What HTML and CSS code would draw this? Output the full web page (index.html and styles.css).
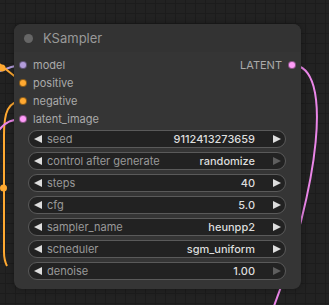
FILE: index.html
```html
<!DOCTYPE html>
<html>
	<head>
		<meta charset="utf-8">
		<title>KSampler</title>
		<link rel="stylesheet" href="styles.css">
	</head>
	<body>
		<div class="graph">
			<!-- links under the node -->
			<svg class="links" width="329" height="305" viewBox="0 0 329 305">
				<path d="M-4 72 C6 70, 12 65, 23 65" stroke="#b39ddb"/>
				<path d="M-3 62 L23 83" stroke="#ffa931"/>
				<path d="M23 101 C8 101, 4 112, 4 135 L4 252 C4 258, 5 262, 7 266" stroke="#ffa931"/>
				<path d="M-6 142 C-2 125, 10 119, 23 119" stroke="#ea86e8"/>
				<path d="M292 65 C335 65, 318 190, 274 306" stroke="#ea86e8"/>
				<circle cx="2" cy="68" r="3.5" fill="#ffa931"/>
				<circle cx="3.5" cy="188" r="3.5" fill="#ffa931"/>
			</svg>

			<div class="node">
				<div class="node-title">
					<span class="title-dot"></span>
					<span>KSampler</span>
				</div>

				<div class="slots">
					<div class="inputs">
						<div class="slot"><span class="dot model"></span>model</div>
						<div class="slot"><span class="dot cond"></span>positive</div>
						<div class="slot"><span class="dot cond"></span>negative</div>
						<div class="slot"><span class="dot latent"></span>latent_image</div>
					</div>
					<div class="outputs">
						<div class="slot">LATENT<span class="dot latent out"></span></div>
					</div>
				</div>

				<div class="widgets">
					<div class="widget">
						<span class="arrow left"></span>
						<span class="label">seed</span>
						<span class="value">9112413273659</span>
						<span class="arrow right"></span>
					</div>
					<div class="widget">
						<span class="arrow left"></span>
						<span class="label">control after generate</span>
						<span class="value">randomize</span>
						<span class="arrow right off"></span>
					</div>
					<div class="widget">
						<span class="arrow left"></span>
						<span class="label">steps</span>
						<span class="value">40</span>
						<span class="arrow right"></span>
					</div>
					<div class="widget">
						<span class="arrow left"></span>
						<span class="label">cfg</span>
						<span class="value">5.0</span>
						<span class="arrow right"></span>
					</div>
					<div class="widget">
						<span class="arrow left"></span>
						<span class="label">sampler_name</span>
						<span class="value">heunpp2</span>
						<span class="arrow right"></span>
					</div>
					<div class="widget">
						<span class="arrow left"></span>
						<span class="label">scheduler</span>
						<span class="value">sgm_uniform</span>
						<span class="arrow right"></span>
					</div>
					<div class="widget">
						<span class="arrow left"></span>
						<span class="label">denoise</span>
						<span class="value">1.00</span>
						<span class="arrow right off"></span>
					</div>
				</div>
			</div>
		</div>
	</body>
</html>
```

FILE: styles.css
```css
/* base */
* {
	margin: 0;
	padding: 0;
	box-sizing: border-box;
}

body {
	font-family: Inter, "Liberation Sans", sans-serif;
	background-color: #222;
	overflow: hidden;
	width: 329px;
	height: 305px;
}

/* canvas with grid */
.graph {
	position: relative;
	width: 329px;
	height: 305px;
	overflow: hidden;
	background-color: #222;
	background-image:
		linear-gradient(to right, #1c1c1c 1px, transparent 1px),
		linear-gradient(to bottom, #1c1c1c 1px, transparent 1px);
	background-size: 10px 10px;
	background-position: 5px 3px;
}

.links {
	position: absolute;
	left: 0;
	top: 0;
}

.links path {
	fill: none;
	stroke-width: 2;
}

/* node */
.node {
	position: absolute;
	left: 14px;
	top: 24px;
	width: 287px;
	height: 265px;
	background-color: #353535;
	border-radius: 8px;
	box-shadow: 0 0 6px rgba(0,0,0,0.35);
	overflow: hidden;
}

.node-title {
	height: 28px;
	display: flex;
	align-items: center;
	gap: 10px;
	padding-left: 10px;
	background-color: #333;
	color: #999;
	font-size: 13px;
}

.title-dot {
	width: 9px;
	height: 9px;
	border-radius: 50%;
	background-color: #666;
}

/* slots */
.slots {
	display: flex;
	justify-content: space-between;
	padding-top: 4px;
}

.slot {
	height: 18px;
	display: flex;
	align-items: center;
	gap: 6px;
	color: #aaa;
	font-size: 11px;
}

.inputs .slot {
	padding-left: 5px;
}

.outputs .slot {
	padding-right: 5px;
}

.dot {
	width: 8px;
	height: 8px;
	border-radius: 50%;
	border: 1px solid rgba(0,0,0,0.45);
}

.dot.model {
	background-color: #b39ddb;
}

.dot.cond {
	background-color: #ffa931;
}

.dot.latent {
	background-color: #ff9cf9;
}

/* widgets */
.widgets {
	display: flex;
	flex-direction: column;
	gap: 4px;
	padding: 2px 15px 0 14px;
}

.widget {
	height: 18px;
	display: flex;
	align-items: center;
	background-color: #222;
	border: 1px solid #5a5a5a;
	border-radius: 9px;
	padding: 0 4px 0 5px;
	font-size: 11px;
}

.label {
	flex: 1;
	color: #999;
	padding-left: 5px;
	white-space: nowrap;
}

.value {
	color: #ddd;
	font-weight: 500;
	padding-right: 18px;
	white-space: nowrap;
}

.arrow {
	width: 0;
	height: 0;
	border-top: 4.5px solid transparent;
	border-bottom: 4.5px solid transparent;
}

.arrow.left {
	border-right: 8px solid #ddd;
}

.arrow.right {
	border-left: 8px solid #ddd;
}

.arrow.right.off {
	border-left-color: #5e5e5e;
}
```
